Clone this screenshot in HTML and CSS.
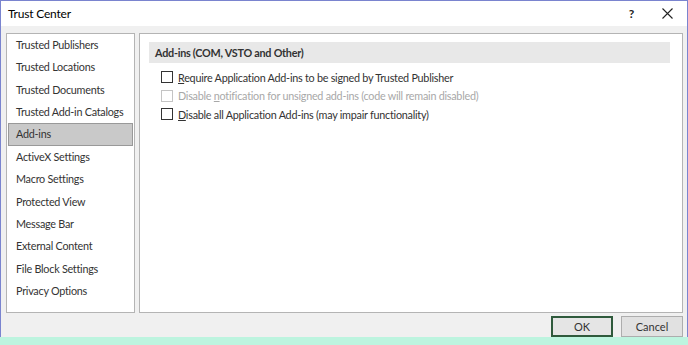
FILE: index.html
```html
<!DOCTYPE html>
<html lang="en">
<head>
  <meta charset="UTF-8">
  <title>Trust Center</title>
  <link rel="stylesheet" href="styles.css">
</head>
<body>
  <div class="window">
    <div class="titlebar">
      <span class="title">Trust Center</span>
      <span class="help">?</span>
      <svg class="close" width="11" height="11" viewBox="0 0 11 11">
        <path d="M0.5 0.5 L10.5 10.5 M10.5 0.5 L0.5 10.5" stroke="#222" stroke-width="1.1" fill="none"/>
      </svg>
    </div>

    <div class="main">
      <div class="sidebar">
        <div class="nav-item">Trusted Publishers</div>
        <div class="nav-item">Trusted Locations</div>
        <div class="nav-item">Trusted Documents</div>
        <div class="nav-item">Trusted Add-in Catalogs</div>
        <div class="nav-item selected">Add-ins</div>
        <div class="nav-item">ActiveX Settings</div>
        <div class="nav-item">Macro Settings</div>
        <div class="nav-item">Protected View</div>
        <div class="nav-item">Message Bar</div>
        <div class="nav-item">External Content</div>
        <div class="nav-item">File Block Settings</div>
        <div class="nav-item">Privacy Options</div>
      </div>

      <div class="content">
        <div class="section-title">Add-ins (COM, VSTO and Other)</div>
        <label class="option"><span class="box"></span><span><u>R</u>equire Application Add-ins to be signed by Trusted Publisher</span></label>
        <label class="option disabled"><span class="box"></span><span>Disable <u>n</u>otification for unsigned add-ins (code will remain disabled)</span></label>
        <label class="option"><span class="box"></span><span><u>D</u>isable all Application Add-ins (may impair functionality)</span></label>
      </div>
    </div>

    <div class="footer">
      <button class="btn default">OK</button>
      <button class="btn">Cancel</button>
    </div>
  </div>
</body>
</html>
```

FILE: styles.css
```css
body {
  margin: 0;
  width: 688px;
  height: 345px;
  background-color: #bdf4df;
  font-family: Lato, "Noto Sans", sans-serif;
  font-size: 10.8px;
  letter-spacing: -0.25px;
  color: #333;
  overflow: hidden;
}
.window {
  box-sizing: border-box;
  height: 337px;
  border: 1px solid #7a84cf;
  border-bottom: none;
  background-color: #f0f0f0;
  display: flex;
  flex-direction: column;
}
.titlebar {
  height: 24px;
  background-color: #fff;
  display: flex;
  align-items: center;
  padding: 1px 14px 0 7px;
}
.title {
  flex: 1;
  color: #000;
  font-size: 12px;
  letter-spacing: -0.2px;
}
.help {
  color: #222;
  font-size: 12px;
  font-weight: bold;
  margin-right: 28px;
}
.main {
  display: flex;
  gap: 4px;
  padding: 7px 4px 0 5px;
  height: 282px;
}
.sidebar {
  width: 125px;
  background-color: #fff;
  border: 1px solid #b4b4b4;
  padding: 0 1px;
}
.nav-item {
  height: 22.4px;
  line-height: 19px;
  padding-left: 7px;
  border: 1px solid transparent;
  box-sizing: border-box;
  white-space: nowrap;
}
.nav-item.selected {
  background-color: #c9c9c9;
  border-color: #999;
  line-height: 20px;
}
.content {
  flex: 1;
  background-color: #fff;
  border: 1px solid #b4b4b4;
  padding: 8px 12px 0 9px;
}
.section-title {
  background-color: #e8e8e8;
  height: 21px;
  line-height: 21px;
  padding-left: 6px;
  font-weight: bold;
  color: #333;
  margin-bottom: 5px;
}
.option {
  display: flex;
  align-items: center;
  height: 18.5px;
  padding-left: 12px;
  white-space: nowrap;
}
.box {
  width: 10px;
  height: 10px;
  border: 1px solid #333;
  background-color: #fff;
  margin-right: 5px;
}
.option.disabled {
  color: #a8a8a8;
}
.option.disabled .box {
  border-color: #c4c4c4;
}
.footer {
  display: flex;
  justify-content: flex-end;
  gap: 8px;
  padding: 3px 4px 0 0;
}
.btn {
  width: 62px;
  height: 21px;
  background-color: #e1e1e1;
  border: 1px solid #adadad;
  font-family: Lato, "Noto Sans", sans-serif;
  font-size: 11px;
  color: #333;
  padding: 0;
}
.btn.default {
  border: 2px solid #2f5a3c;
  background-color: #e5e5e5;
}
```
